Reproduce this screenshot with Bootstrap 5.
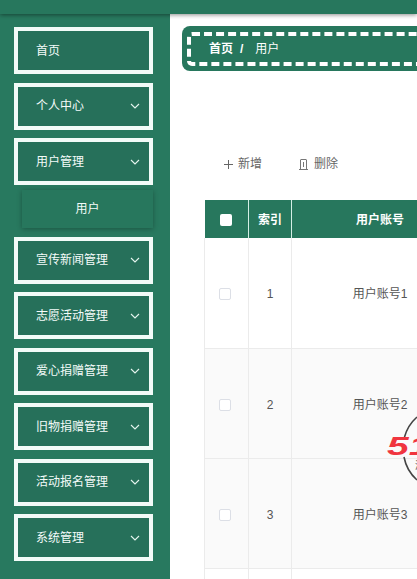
<!DOCTYPE html>
<html lang="zh">

<head>
    <meta charset="UTF-8">
    <meta name="viewport" content="width=device-width, initial-scale=1.0">
    <title>用户</title>

    <link href="https://cdn.jsdelivr.net/npm/bootstrap@5.3.0/dist/css/bootstrap.min.css" rel="stylesheet">
    <script src="https://cdn.jsdelivr.net/npm/bootstrap@5.3.0/dist/js/bootstrap.bundle.min.js"></script>

    <style>
        html, body { height: 100%; overflow: hidden; }
        body { font-family: "Liberation Sans", "Noto Sans CJK SC", sans-serif; font-size: 12px; background: #fff; }
        .page-wrap { position: relative; width: 417px; height: 579px; overflow: hidden; }
        .top-strip { height: 14px; background: #27775d; box-shadow: 0 1px 4px rgba(0, 0, 0, .45); position: relative; z-index: 2; }
        .side-menu { width: 170px; height: 565px; flex: none; background: #28795f; padding: 13px 17px 0 14px; gap: 8.5px; }
        .menu-item { height: 47px; border: 4px solid #f2fbf8; background: #26705a; color: #f4fbf9; padding: 0 9px 0 18px; flex: none; }
        .menu-sub { height: 38px; margin: -3.5px 0 0 8px; background: #27775d; color: #f4fbf9; box-shadow: 0 1px 5px rgba(0, 0, 0, .3); flex: none; }
        .main-area { width: 247px; flex: none; padding: 12px 0 0 12px; }
        .crumb-box { width: 300px; height: 45px; background: #27775d; border-radius: 8px; padding: 6px 5px 5px; }
        .crumb-inner { height: 34px; width: 320px; border: 4px dashed #fff; border-radius: 5px; color: #fff; padding-left: 18px; line-height: 26px; }
        .crumb-sep { margin: 0 12px 0 7px; font-weight: 700; }
        .tool-row { margin: 83px 0 0 41px; height: 20px; color: #666; gap: 36px; }
        .del-btn { gap: 5px; }
        .data-grid { width: 264px; margin: 26px 0 0 22px; border-collapse: collapse; table-layout: fixed; text-align: center; color: #555; }
        .data-grid th { height: 38px; background: #27775d; color: #fff; font-weight: 700; border-right: 1px solid #d5eee5; padding: 1px 0 0; }
        .data-grid td { height: 110px; border: 1px solid #ebebeb; border-top: 0; padding: 3px 0 0; }
        .data-grid tr.even-row td { background: #fafafa; }
        .box-head { display: block; width: 12px; height: 12px; margin: 0 auto; background: #fff; border-radius: 2px; }
        .box-cell { display: block; width: 12px; height: 12px; margin: 0 auto 0 14px; background: #fff; border: 1px solid #dcdfe6; border-radius: 2px; }
        .stamp { position: absolute; left: 386px; top: 408px; width: 100px; height: 84px; }
        .stamp svg { position: absolute; left: 0; top: 0; }
        .stamp-red { position: absolute; left: 1px; top: 24px; color: #f0353f; font-size: 26px; line-height: 28px; font-weight: 700; font-style: italic; transform: scaleX(1.5); transform-origin: left center; }
        .stamp-small { position: absolute; left: 29px; top: 51px; color: #555; font-size: 10px; line-height: 13px; }
    </style>
</head>

<body>
    <div class="page-wrap">
        <div class="top-strip"></div>
        <div class="d-flex">
            <ul class="side-menu list-unstyled mb-0 d-flex flex-column">
                <li class="menu-item d-flex align-items-center">首页</li>
                <li class="menu-item d-flex align-items-center justify-content-between">个人中心
                    <svg width="10" height="6" viewBox="0 0 10 6"><polyline points="1,1 5,5 9,1" fill="none" stroke="#e6f5ef" stroke-width="1.1"/></svg></li>
                <li class="menu-item d-flex align-items-center justify-content-between">用户管理
                    <svg width="10" height="6" viewBox="0 0 10 6"><polyline points="1,1 5,5 9,1" fill="none" stroke="#e6f5ef" stroke-width="1.1"/></svg></li>
                <li class="menu-sub d-flex align-items-center justify-content-center">用户</li>
                <li class="menu-item d-flex align-items-center justify-content-between">宣传新闻管理
                    <svg width="10" height="6" viewBox="0 0 10 6"><polyline points="1,1 5,5 9,1" fill="none" stroke="#e6f5ef" stroke-width="1.1"/></svg></li>
                <li class="menu-item d-flex align-items-center justify-content-between">志愿活动管理
                    <svg width="10" height="6" viewBox="0 0 10 6"><polyline points="1,1 5,5 9,1" fill="none" stroke="#e6f5ef" stroke-width="1.1"/></svg></li>
                <li class="menu-item d-flex align-items-center justify-content-between">爱心捐赠管理
                    <svg width="10" height="6" viewBox="0 0 10 6"><polyline points="1,1 5,5 9,1" fill="none" stroke="#e6f5ef" stroke-width="1.1"/></svg></li>
                <li class="menu-item d-flex align-items-center justify-content-between">旧物捐赠管理
                    <svg width="10" height="6" viewBox="0 0 10 6"><polyline points="1,1 5,5 9,1" fill="none" stroke="#e6f5ef" stroke-width="1.1"/></svg></li>
                <li class="menu-item d-flex align-items-center justify-content-between">活动报名管理
                    <svg width="10" height="6" viewBox="0 0 10 6"><polyline points="1,1 5,5 9,1" fill="none" stroke="#e6f5ef" stroke-width="1.1"/></svg></li>
                <li class="menu-item d-flex align-items-center justify-content-between">系统管理
                    <svg width="10" height="6" viewBox="0 0 10 6"><polyline points="1,1 5,5 9,1" fill="none" stroke="#e6f5ef" stroke-width="1.1"/></svg></li>
            </ul>

            <main class="main-area">
                <div class="crumb-box">
                    <div class="crumb-inner"><b>首页</b><span class="crumb-sep">/</span>用户</div>
                </div>

                <div class="tool-row d-flex align-items-center">
                    <span class="d-flex align-items-center gap-1">
                        <svg width="11" height="11" viewBox="0 0 11 11"><path d="M5.5 1v9M1 5.5h9" stroke="#666" fill="none"/></svg>
                        新增
                    </span>
                    <span class="del-btn d-flex align-items-center">
                        <svg width="11" height="12" viewBox="0 0 11 12"><path d="M1 11.5h9M3 1.5h5M2.5 1.5v10M8.5 1.5v10M5.5 4v5" stroke="#777" fill="none"/></svg>
                        删除
                    </span>
                </div>

                <table class="data-grid">
                    <colgroup><col style="width:44px"><col style="width:43px"><col style="width:177px"></colgroup>
                    <thead>
                        <tr><th><span class="box-head"></span></th><th>索引</th><th>用户账号</th></tr>
                    </thead>
                    <tbody>
                        <tr><td><span class="box-cell"></span></td><td>1</td><td>用户账号1</td></tr>
                        <tr class="even-row"><td><span class="box-cell"></span></td><td>2</td><td>用户账号2</td></tr>
                        <tr class="even-row"><td><span class="box-cell"></span></td><td>3</td><td>用户账号3</td></tr>
                        <tr><td><span class="box-cell"></span></td><td></td><td></td></tr>
                    </tbody>
                </table>
            </main>
        </div>

        <div class="stamp">
            <svg width="100" height="84" viewBox="0 0 100 84">
                <path d="M31 9 A41 41 0 0 0 18.5 29 M18 49 A41 41 0 0 0 31 72" fill="none" stroke="#444" stroke-width="1.6"/>
            </svg>
            <span class="stamp-red">51</span>
            <span class="stamp-small">源</span>
        </div>
    </div>
</body>

</html>
